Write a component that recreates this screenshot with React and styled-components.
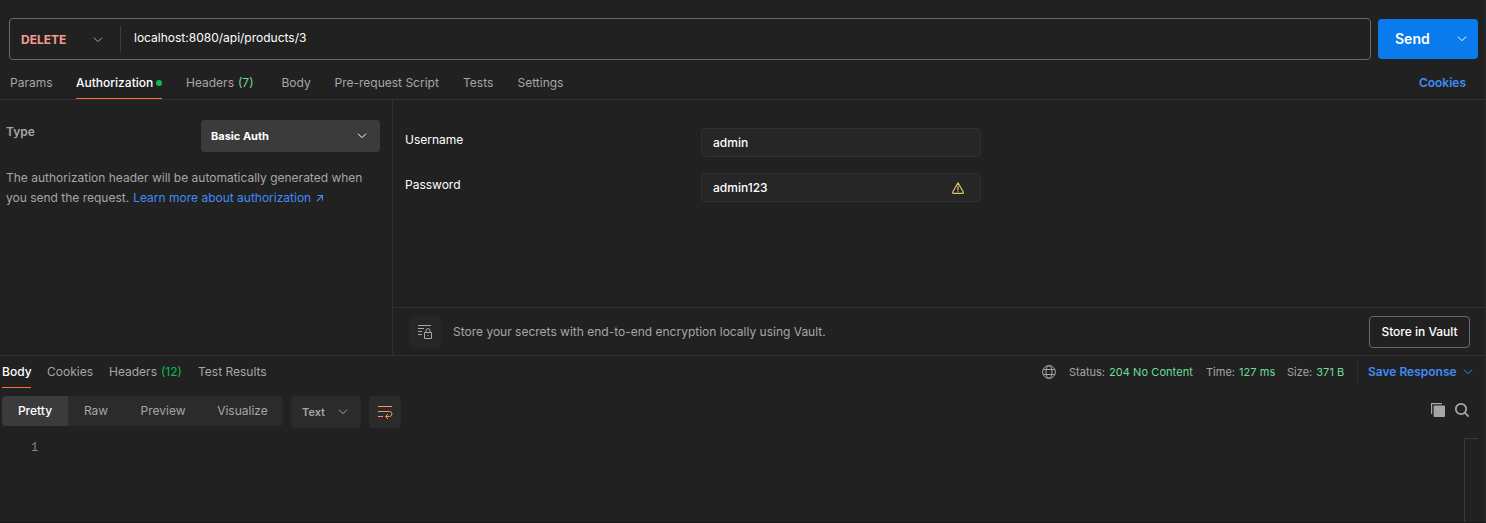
import React from "react";
import styled, { createGlobalStyle } from "styled-components";

const Global = createGlobalStyle`
  * { box-sizing: border-box; }
  body { margin: 0; background: #212121; font-family: Inter, "Liberation Sans", sans-serif; font-size: 12px; line-height: 20px; color: #a6a6a6; overflow: hidden; }
  svg { display: block; flex: none; }
  button { font: inherit; border: 0; background: none; padding: 0; margin: 0; color: inherit; }
`;

const Page = styled.main`
  width: 1486px;
  height: 523px;
  display: flex;
  flex-direction: column;
  border-right: 1px solid #2b2b2b;
  border-bottom: 1px solid #1b1818;
  white-space: nowrap;
`;

const RequestBar = styled.header`
  display: flex;
  align-items: center;
  gap: 7px;
  height: 66px;
  padding: 18px 7px 6px 9px;
`;

const UrlBox = styled.div`
  flex: 1;
  display: flex;
  align-items: center;
  height: 42px;
  border: 1px solid #6b6b6b;
  border-radius: 4px;
`;

const Method = styled.button`
  display: flex;
  align-items: center;
  justify-content: space-between;
  width: 111px;
  height: 26px;
  padding: 2px 17px 0 11px;
  border-right: 1px solid #3b3b3b;
  color: #f79a8e;
  font-weight: 700;
`;

const Url = styled.span`
  padding: 0 0 2px 13px;
  color: #fff;
`;

const SendButton = styled.button`
  display: flex;
  align-items: center;
  justify-content: space-between;
  width: 100px;
  height: 40px;
  padding: 0 11px 0 17px;
  border-radius: 4px;
  background: #097bed;
  color: #fff;
  font-size: 14px;
  font-weight: 600;
`;

const RequestTabs = styled.nav`
  display: flex;
  gap: 24px;
  height: 34px;
  padding: 0 19px 0 10px;
  border-bottom: 1px solid #303030;
`;

const Tab = styled.a`
  display: flex;
  align-items: center;
  gap: ${(p) => (p.$active ? 3 : 4)}px;
  height: ${(p) => p.$height}px;
  width: ${(p) => p.$width}px;
  padding-top: 1px;
  border-bottom: 1px solid ${(p) => (p.$active ? "#ff6c37" : "transparent")};
  color: ${(p) => (p.$active ? "#fff" : "#a6a6a6")};
  font-weight: ${(p) => (p.$active ? 500 : 400)};
`;

const Count = styled.span`
  color: ${(p) => p.$color};
`;

const Dot = styled.i`
  width: 6px;
  height: 6px;
  border-radius: 50%;
  background: #0cbb52;
`;

const CookiesLink = styled.a`
  margin-left: auto;
  line-height: 34px;
  color: #3f8cf5;
  font-weight: 600;
`;

const AuthArea = styled.section`
  display: grid;
  grid-template-columns: 393px 1fr;
  height: 256px;
  border-bottom: 1px solid #303030;
`;

const AuthType = styled.div`
  padding: 20px 12px 0 6px;
  border-right: 1px solid #303030;
`;

const TypeRow = styled.div`
  display: flex;
  justify-content: space-between;
  align-items: center;
  height: 32px;
`;

const TypeLabel = styled.span`
  padding-bottom: 8px;
  font-weight: 600;
`;

const Select = styled.button`
  display: flex;
  align-items: center;
  justify-content: space-between;
  width: 179px;
  height: 32px;
  padding: 0 13px 0 10px;
  border-radius: 4px;
  background: #3b3b3b;
  color: #fff;
  font-size: 11px;
  font-weight: 700;
`;

const Hint = styled.p`
  margin: 16px 0 0;
`;

const HintLine = styled.span`
  display: flex;
  align-items: center;
`;

const HintLink = styled.a`
  display: flex;
  align-items: center;
  gap: 5px;
  margin-left: 4px;
  color: #3f8cf5;
`;

const Credentials = styled.div`
  display: flex;
  flex-direction: column;
`;

const Fields = styled.div`
  flex: 1;
  display: flex;
  flex-direction: column;
  gap: 16px;
  padding: 28px 0 0 12px;
`;

const Field = styled.label`
  display: grid;
  grid-template-columns: 296px 280px;
  color: #fff;
`;

const FieldLabel = styled.span`
  line-height: 23px;
`;

const Input = styled.span`
  display: flex;
  align-items: center;
  justify-content: space-between;
  height: 29px;
  padding: 0 16px 0 11px;
  border: 1px solid #303030;
  border-radius: 4px;
  background: #262626;
  font-weight: 500;
`;

const VaultBar = styled.div`
  display: flex;
  align-items: center;
  height: 48px;
  padding: 0 15px 0 16px;
  border-top: 1px solid #303030;
`;

const VaultIcon = styled.span`
  display: grid;
  place-items: center;
  width: 32px;
  height: 32px;
  margin-right: 12px;
  border-radius: 4px;
  background: #262626;
`;

const VaultButton = styled.button`
  width: 101px;
  height: 32px;
  margin-left: auto;
  border: 1px solid #6b6b6b;
  border-radius: 4px;
  color: #fff;
  font-weight: 500;
`;

const ResponseHeader = styled.div`
  display: flex;
  height: 33px;
  padding: 0 12px 0 2px;
`;

const ResponseTabs = styled.nav`
  display: flex;
  gap: 16px;
  height: 32px;
`;

const Meta = styled.div`
  display: flex;
  align-items: center;
  height: 32px;
  margin-left: auto;
  font-size: 11px;
`;

const Stat = styled.span`
  width: ${(p) => p.$width}px;
`;

const StatValue = styled.span`
  margin-left: 4px;
  color: #6bdd9a;
  letter-spacing: 0.07px;
`;

const SaveButton = styled.button`
  display: flex;
  align-items: center;
  justify-content: space-between;
  width: 116px;
  height: 20px;
  padding-left: 10px;
  border-left: 1px solid #303030;
  color: #3f8cf5;
  font-size: 12px;
  font-weight: 600;
`;

const Toolbar = styled.div`
  display: flex;
  align-items: flex-start;
  gap: 8px;
  height: 32px;
  margin-top: 7px;
  padding: 0 15px 0 2px;
`;

const Segments = styled.div`
  display: flex;
  width: 281px;
  height: 30px;
  border-radius: 4px;
  background: #2b2b2b;
  overflow: hidden;
`;

const Segment = styled.button`
  width: ${(p) => p.$width}px;
  height: 30px;
  background: ${(p) => (p.$active ? "#3b3b3b" : "transparent")};
  color: ${(p) => (p.$active ? "#fff" : "#a6a6a6")};
  font-weight: ${(p) => (p.$active ? 500 : 400)};
`;

const ToolButton = styled.button`
  display: flex;
  align-items: center;
  justify-content: space-between;
  width: ${(p) => p.$width}px;
  height: 32px;
  padding: 0 ${(p) => p.$right}px 0 ${(p) => p.$left}px;
  border-radius: 4px;
  background: #2b2b2b;
  font-size: 11px;
  font-weight: 600;
`;

const ToolIcons = styled.div`
  display: flex;
  gap: 8px;
  margin: 6px 0 0 auto;
`;

const Editor = styled.div`
  flex: 1;
  display: flex;
  justify-content: space-between;
  padding: 10px 7px 0 31px;
`;

const LineNumber = styled.span`
  line-height: 21px;
  color: #858585;
  font-family: "Liberation Mono", monospace;
`;

const Ruler = styled.div`
  width: 14px;
  border: solid #3a3a3a;
  border-width: 1px 0 0 1px;
`;

const Chevron = ({ color }) => (
  <svg width="10" height="10" viewBox="0 0 10 10" fill="none" stroke={color}>
    <path d="M1 2.7l4 4 4-4" />
  </svg>
);

const ArrowOut = () => (
  <svg width="8" height="8" viewBox="0 0 8 8" fill="none" stroke="#3f8cf5" strokeWidth="1.1">
    <path d="M1.5 1.5h5v5M6.5 1.5L1 7" />
  </svg>
);

const Warning = () => (
  <svg width="12" height="12" viewBox="0 0 12 12" fill="none" stroke="#e5c766" strokeWidth="1.1" strokeLinejoin="round">
    <path d="M6 .9L11.3 10a.9.9 0 0 1-.8 1.4h-9A.9.9 0 0 1 .7 10L6 .9zM6 4v4M6 8.6v1.2" />
  </svg>
);

const ListLock = () => (
  <svg width="16" height="16" viewBox="0 0 16 16" fill="none" stroke="#a6a6a6">
    <path d="M1 1.5h13M1 4.5h6M1 7.5h4M1 10.5h4M7.5 8.5h7v6h-7zM9 8.5V6.6a2 2 0 0 1 4 0v1.9M11 11v1" />
  </svg>
);

const Globe = () => (
  <svg width="14" height="14" viewBox="0 0 14 14" fill="none" stroke="#a6a6a6">
    <circle cx="7" cy="7" r="6.4" />
    <ellipse cx="7" cy="7" rx="3" ry="6.4" />
    <path d="M1.3 4.5h11.4M1.3 9.5h11.4" />
  </svg>
);

const Wrap = () => (
  <svg width="16" height="16" viewBox="0 0 16 16" fill="none" stroke="#ff8e64">
    <path d="M1 2.5h14M1 7.5h11.5a2.3 2.3 0 0 1 0 5H9M1 12.5h5M11 10l-2.5 2.5L11 15" />
  </svg>
);

const Copy = () => (
  <svg width="16" height="16" viewBox="0 0 16 16" fill="#a6a6a6">
    <path d="M1 1h11v1.2H2.2V12H1zM4 3.4h10a1 1 0 0 1 1 1V14a1 1 0 0 1-1 1H4.6a1 1 0 0 1-1-1V4.4a1 1 0 0 1 1-1z" />
  </svg>
);

const Search = () => (
  <svg width="16" height="16" viewBox="0 0 16 16" fill="none" stroke="#a6a6a6" strokeWidth="1.8">
    <circle cx="7" cy="7" r="5.2" />
    <path d="M10.7 10.7l4 4" />
  </svg>
);

export default function App() {
  return (
    <>
      <Global />
      <Page>
        <RequestBar>
          <UrlBox>
            <Method>DELETE<Chevron color="#a6a6a6" /></Method>
            <Url>localhost:8080/api/products/3</Url>
          </UrlBox>
          <SendButton>Send<Chevron color="#fff" /></SendButton>
        </RequestBar>
        <RequestTabs>
          <Tab $height={33} $width={42}>Params</Tab>
          <Tab $height={33} $width={86} $active>Authorization<Dot /></Tab>
          <Tab $height={33} $width={71.5}>Headers <Count $color="#6bdd9a">(7)</Count></Tab>
          <Tab $height={33} $width={29}>Body</Tab>
          <Tab $height={33} $width={104.5}>Pre-request Script</Tab>
          <Tab $height={33} $width={30.5}>Tests</Tab>
          <Tab $height={33} $width={48}>Settings</Tab>
          <CookiesLink>Cookies</CookiesLink>
        </RequestTabs>
        <AuthArea>
          <AuthType>
            <TypeRow>
              <TypeLabel>Type</TypeLabel>
              <Select>Basic Auth<Chevron color="#fff" /></Select>
            </TypeRow>
            <Hint>
              <HintLine>The authorization header will be automatically generated when</HintLine>
              <HintLine>
                you send the request.
                <HintLink>Learn more about authorization<ArrowOut /></HintLink>
              </HintLine>
            </Hint>
          </AuthType>
          <Credentials>
            <Fields>
              <Field><FieldLabel>Username</FieldLabel><Input>admin</Input></Field>
              <Field><FieldLabel>Password</FieldLabel><Input>admin123<Warning /></Input></Field>
            </Fields>
            <VaultBar>
              <VaultIcon><ListLock /></VaultIcon>
              <span>Store your secrets with end-to-end encryption locally using Vault.</span>
              <VaultButton>Store in Vault</VaultButton>
            </VaultBar>
          </Credentials>
        </AuthArea>
        <ResponseHeader>
          <ResponseTabs>
            <Tab $height={32} $width={29} $active>Body</Tab>
            <Tab $height={32} $width={46}>Cookies</Tab>
            <Tab $height={32} $width={73}>Headers <Count $color="#0cbb52">(12)</Count></Tab>
            <Tab $height={32} $width={70}>Test Results</Tab>
          </ResponseTabs>
          <Meta>
            <Stat $width={27}><Globe /></Stat>
            <Stat $width={137}>Status:<StatValue>204 No Content</StatValue></Stat>
            <Stat $width={81}>Time:<StatValue>127 ms</StatValue></Stat>
            <Stat $width={70}>Size:<StatValue>371 B</StatValue></Stat>
            <SaveButton>Save Response<Chevron color="#3f8cf5" /></SaveButton>
          </Meta>
        </ResponseHeader>
        <Toolbar>
          <Segments>
            <Segment $width={66} $active>Pretty</Segment>
            <Segment $width={56}>Raw</Segment>
            <Segment $width={78}>Preview</Segment>
            <Segment $width={81}>Visualize</Segment>
          </Segments>
          <ToolButton $width={70} $left={11} $right={13}>Text<Chevron color="#a6a6a6" /></ToolButton>
          <ToolButton $width={32} $left={8} $right={8}><Wrap /></ToolButton>
          <ToolIcons><Copy /><Search /></ToolIcons>
        </Toolbar>
        <Editor>
          <LineNumber>1</LineNumber>
          <Ruler />
        </Editor>
      </Page>
    </>
  );
}
